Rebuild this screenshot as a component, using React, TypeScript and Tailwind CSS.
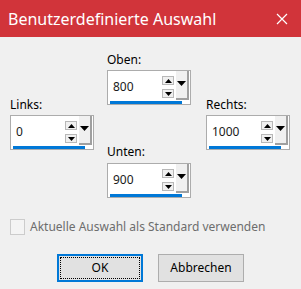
import React from "react";

const font = { fontFamily: '"Noto Sans", "Open Sans", sans-serif' };

function Tri({ up, big }: { up?: boolean; big?: boolean }) {
  const w = big ? 9 : 7;
  const h = big ? 5 : 4;
  return (
    <svg width={w} height={h} viewBox={`0 0 ${w} ${h}`}>
      {up ? (
        <polygon points={`0,${h} ${w},${h} ${w / 2},0`} fill="#000" />
      ) : (
        <polygon points={`0,0 ${w},0 ${w / 2},${h}`} fill="#000" />
      )}
    </svg>
  );
}

function Field({ value }: { value: string }) {
  return (
    <div className="w-[84px] h-[35px] border border-[#acacac] bg-white flex flex-col">
      <div className="flex h-[30px]">
        <div className="w-[54px] flex items-center pl-[5px] text-[12px] text-[#1a1a1a] pt-[1px]">{value}</div>
        <div className="w-[12px] flex flex-col pt-[5px] gap-[4px]">
          <div className="h-[9px] border border-[#b8b8b8] bg-[#f0f0f0] flex items-center justify-center">
            <Tri up />
          </div>
          <div className="h-[9px] border border-[#b8b8b8] bg-[#f0f0f0] flex items-center justify-center">
            <Tri />
          </div>
        </div>
        <div className="w-[13px] ml-[2px] h-[29px] bg-[#f0f0f0] border-r-2 border-b-2 border-r-[#a0a0a0] border-b-[#a0a0a0] flex justify-center pt-[10px]">
          <Tri big />
        </div>
      </div>
      <div className="ml-[2px] w-[72px] h-[3px] bg-[#0078d7]" />
    </div>
  );
}

export default function App() {
  return (
    <div className="w-[301px] h-[289px] bg-[#f0f0f0] flex flex-col" style={font}>
      <div className="h-[37px] bg-[#d1343a] flex items-center justify-between pl-[8px] pr-[13px]">
        <span className="text-white text-[16px]">Benutzerdefinierte Auswahl</span>
        <svg width="12" height="12" viewBox="0 0 12 12">
          <path d="M1 1 L11 11 M11 1 L1 11" stroke="#fff" strokeWidth="1.2" />
        </svg>
      </div>
      <div className="flex pl-[10px] pt-[15px]">
        <div className="flex flex-col pt-[45px]">
          <span className="text-[12px] leading-[16px] text-black pb-[2px]">Links:</span>
          <Field value="0" />
        </div>
        <div className="flex flex-col ml-[13px]">
          <span className="text-[12px] leading-[16px] text-black pb-[2px]">Oben:</span>
          <Field value="800" />
          <span className="text-[12px] leading-[16px] text-black pb-[3px] mt-[39px]">Unten:</span>
          <Field value="900" />
        </div>
        <div className="flex flex-col ml-[15px] pt-[45px]">
          <span className="text-[12px] leading-[16px] text-black pb-[2px]">Rechts:</span>
          <Field value="1000" />
        </div>
      </div>
      <div className="flex items-center pl-[10px] mt-[20px] gap-[5px]">
        <div className="w-[15px] h-[16px] border border-[#cccccc] bg-[#f4f4f4]" />
        <span className="text-[12px] text-[#6d6d6d]">Aktuelle Auswahl als Standard verwenden</span>
      </div>
      <div className="flex justify-center gap-[15px] mt-[18px]">
        <div className="w-[86px] h-[28px] border-2 border-[#0078d7] bg-[#e1e1e1] p-[1px]">
          <div className="w-full h-full border border-dotted border-black flex items-center justify-center text-[12px] text-black">OK</div>
        </div>
        <div className="w-[86px] h-[28px] border border-[#adadad] bg-[#e1e1e1] flex items-center justify-center text-[12px] text-black">Abbrechen</div>
      </div>
    </div>
  );
}
